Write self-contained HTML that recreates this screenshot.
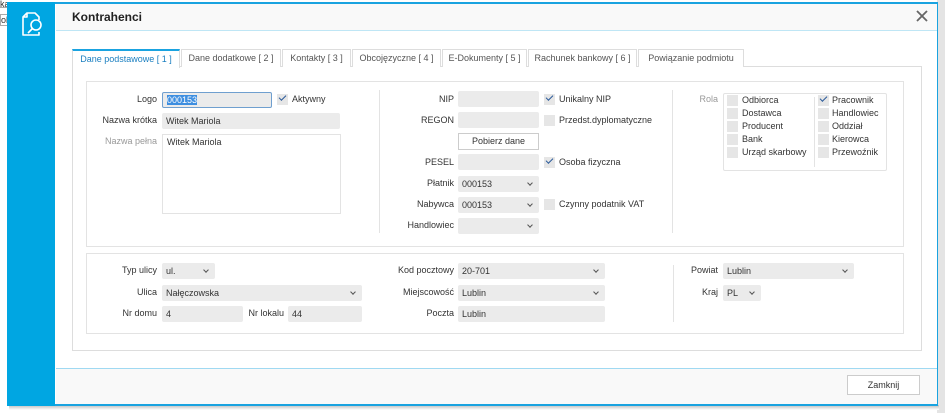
<!DOCTYPE html>
<html><head><meta charset="utf-8"><style>
*{box-sizing:border-box;margin:0;padding:0}
body{width:945px;height:413px;overflow:hidden;background:#fff;font-family:"Liberation Sans",sans-serif;font-size:9px;color:#333;position:relative}
.a{position:absolute}
.lbl{position:absolute;text-align:right;line-height:15px;white-space:nowrap}
.in{position:absolute;height:16px;background:#ebebeb;border-radius:2px;line-height:16px;padding-left:4px;white-space:nowrap}
.sel::after{content:"";position:absolute;right:7px;top:5px;width:3px;height:3px;border-right:1px solid #555;border-bottom:1px solid #555;transform:rotate(45deg)}
.cb{position:absolute;width:11px;height:11px;background:#e6e6e6}
.ck::after{content:"";position:absolute;left:2px;top:1px;width:6px;height:3px;border-left:1.3px solid #2a5a9a;border-bottom:1.3px solid #2a5a9a;transform:rotate(-45deg)}
.t{position:absolute;line-height:13px;white-space:nowrap}
.tab{position:absolute;top:49px;height:18px;border:1px solid #ddd;border-bottom:none;background:#fff;line-height:17px;text-align:center;color:#555;font-size:9px}
</style></head><body>
<div class="a" style="left:0;top:0;width:25px;height:8px;border-bottom:1px solid #aaa;font-size:9px;line-height:8px">ka</div>
<div class="a" style="left:0;top:14px;width:25px;height:12px;border:1px solid #aaa;font-size:9px;line-height:10px">ola</div>
<div class="a" style="left:937px;top:0;width:8px;height:413px;background:#e4e4e4"></div>
<div class="a" style="left:9px;top:405px;width:930px;height:5px;background:linear-gradient(#bbb,#fff)"></div>
<div class="a" style="left:7px;top:2px;width:931px;height:404px;background:#fff;border:1px solid #1aa3e0;border-top-width:2px;border-bottom-width:2px"></div>
<div class="a" style="left:7px;top:2px;width:48px;height:404px;background:#00a6e2"></div>
<svg class="a" style="left:19px;top:10px" width="26" height="28" viewBox="0 0 26 28" fill="none" stroke="#fff" stroke-width="1.6" stroke-linejoin="round"><path d="M11 3h5l4 4v3M20 22v3H4V7l4-4h3M4 7h4V3"/><circle cx="17" cy="15" r="5"/><path d="M13.5 18.5L9 23"/></svg>
<div class="a" style="left:56px;top:4px;width:881px;height:27px;background:#f9f9f9;border-bottom:1px solid #bfe6f5"></div>
<div class="a" style="left:72px;top:10px;font-size:12px;font-weight:bold;color:#222">Kontrahenci</div>
<svg class="a" style="left:916px;top:10px" width="12" height="12" viewBox="0 0 12 12" stroke="#666" stroke-width="1.8"><path d="M1 1L11 11M11 1L1 11"/></svg>
<div class="a" style="left:56px;top:368px;width:881px;height:36px;background:#f9f9f9;border-top:1px solid #9fd9f2"></div>
<div class="a" style="left:847px;top:375px;width:73px;height:20px;background:#fff;border:1px solid #ccc;text-align:center;line-height:18px">Zamknij</div>
<div class="a" style="left:72px;top:66px;width:850px;height:285px;border:1px solid #ddd"></div>
<div class="tab" style="left:72px;width:108px;border-top:2px solid #1aa3e0;color:#1a7fc0;height:19px">Dane podstawowe [ 1 ]</div>
<div class="tab" style="left:181px;width:100px">Dane dodatkowe [ 2 ]</div>
<div class="tab" style="left:282px;width:69px">Kontakty [ 3 ]</div>
<div class="tab" style="left:352px;width:89px">Obcojęzyczne [ 4 ]</div>
<div class="tab" style="left:442px;width:85px">E-Dokumenty [ 5 ]</div>
<div class="tab" style="left:528px;width:109px">Rachunek bankowy [ 6 ]</div>
<div class="tab" style="left:638px;width:106px">Powiązanie podmiotu</div>
<div class="a" style="left:86px;top:81px;width:818px;height:166px;border:1px solid #e3e3e3"></div>
<div class="a" style="left:86px;top:253px;width:818px;height:81px;border:1px solid #e3e3e3"></div>
<div class="a" style="left:379px;top:90px;width:1px;height:143px;background:#e3e3e3"></div>
<div class="a" style="left:672px;top:90px;width:1px;height:143px;background:#e3e3e3"></div>
<div class="a" style="left:673px;top:265px;width:1px;height:57px;background:#e3e3e3"></div>
<div class="lbl" style="right:788px;top:92px">Logo</div>
<div class="in" style="left:162px;top:92px;width:110px;border:1px solid #6f9fcf;line-height:14px"><span style="background:#3d8ee0;color:#fff">000153</span></div>
<div class="cb ck" style="left:277px;top:94px"></div><div class="t" style="left:292px;top:93px">Aktywny</div>
<div class="lbl" style="right:788px;top:113px">Nazwa krótka</div>
<div class="in" style="left:162px;top:113px;width:178px">Witek Mariola</div>
<div class="lbl" style="right:788px;top:134px;color:#999">Nazwa pełna</div>
<div class="a" style="left:162px;top:134px;width:179px;height:80px;border:1px solid #e3e3e3;padding:2px 4px;line-height:11px">Witek Mariola</div>
<div class="lbl" style="right:491px;top:92px">NIP</div><div class="in" style="left:458px;top:91px;width:81px"></div>
<div class="cb ck" style="left:544px;top:94px"></div><div class="t" style="left:559px;top:93px">Unikalny NIP</div>
<div class="lbl" style="right:491px;top:113px">REGON</div><div class="in" style="left:458px;top:112px;width:81px"></div>
<div class="cb" style="left:544px;top:115px"></div><div class="t" style="left:559px;top:114px">Przedst.dyplomatyczne</div>
<div class="a" style="left:458px;top:133px;width:81px;height:17px;border:1px solid #ccc;text-align:center;line-height:15px">Pobierz dane</div>
<div class="lbl" style="right:491px;top:155px">PESEL</div><div class="in" style="left:458px;top:154px;width:81px"></div>
<div class="cb ck" style="left:544px;top:157px"></div><div class="t" style="left:559px;top:156px">Osoba fizyczna</div>
<div class="lbl" style="right:491px;top:176px">Płatnik</div><div class="in sel" style="left:458px;top:176px;width:81px">000153</div>
<div class="lbl" style="right:491px;top:197px">Nabywca</div><div class="in sel" style="left:458px;top:197px;width:81px">000153</div>
<div class="cb" style="left:544px;top:199px"></div><div class="t" style="left:559px;top:198px">Czynny podatnik VAT</div>
<div class="lbl" style="right:491px;top:218px">Handlowiec</div><div class="in sel" style="left:458px;top:218px;width:81px"></div>
<div class="lbl" style="right:227px;top:92px;color:#999">Rola</div>
<div class="a" style="left:723px;top:93px;width:164px;height:78px;border:1px solid #e3e3e3;border-radius:2px"></div>
<div class="a" style="left:814px;top:97px;width:1px;height:70px;background:#e3e3e3"></div>
<div class="cb" style="left:727px;top:95px"></div><div class="t" style="left:742px;top:94px">Odbiorca</div>
<div class="cb" style="left:727px;top:108px"></div><div class="t" style="left:742px;top:107px">Dostawca</div>
<div class="cb" style="left:727px;top:121px"></div><div class="t" style="left:742px;top:120px">Producent</div>
<div class="cb" style="left:727px;top:134px"></div><div class="t" style="left:742px;top:133px">Bank</div>
<div class="cb" style="left:727px;top:147px"></div><div class="t" style="left:742px;top:146px">Urząd skarbowy</div>
<div class="cb ck" style="left:818px;top:95px"></div><div class="t" style="left:832px;top:94px">Pracownik</div>
<div class="cb" style="left:818px;top:108px"></div><div class="t" style="left:832px;top:107px">Handlowiec</div>
<div class="cb" style="left:818px;top:121px"></div><div class="t" style="left:832px;top:120px">Oddział</div>
<div class="cb" style="left:818px;top:134px"></div><div class="t" style="left:832px;top:133px">Kierowca</div>
<div class="cb" style="left:818px;top:147px"></div><div class="t" style="left:832px;top:146px">Przewoźnik</div>
<div class="lbl" style="right:788px;top:263px">Typ ulicy</div><div class="in sel" style="left:162px;top:263px;width:53px">ul.</div>
<div class="lbl" style="right:788px;top:285px">Ulica</div><div class="in sel" style="left:162px;top:285px;width:200px">Nałęczowska</div>
<div class="lbl" style="right:788px;top:306px">Nr domu</div><div class="in" style="left:162px;top:306px;width:81px">4</div>
<div class="lbl" style="right:661px;top:306px">Nr lokalu</div><div class="in" style="left:288px;top:306px;width:74px">44</div>
<div class="lbl" style="right:491px;top:263px">Kod pocztowy</div><div class="in sel" style="left:458px;top:263px;width:147px">20-701</div>
<div class="lbl" style="right:491px;top:285px">Miejscowość</div><div class="in sel" style="left:458px;top:285px;width:147px">Lublin</div>
<div class="lbl" style="right:491px;top:306px">Poczta</div><div class="in" style="left:458px;top:306px;width:147px">Lublin</div>
<div class="lbl" style="right:227px;top:263px">Powiat</div><div class="in sel" style="left:723px;top:263px;width:131px">Lublin</div>
<div class="lbl" style="right:227px;top:285px">Kraj</div><div class="in sel" style="left:723px;top:285px;width:38px">PL</div>
</body></html>
